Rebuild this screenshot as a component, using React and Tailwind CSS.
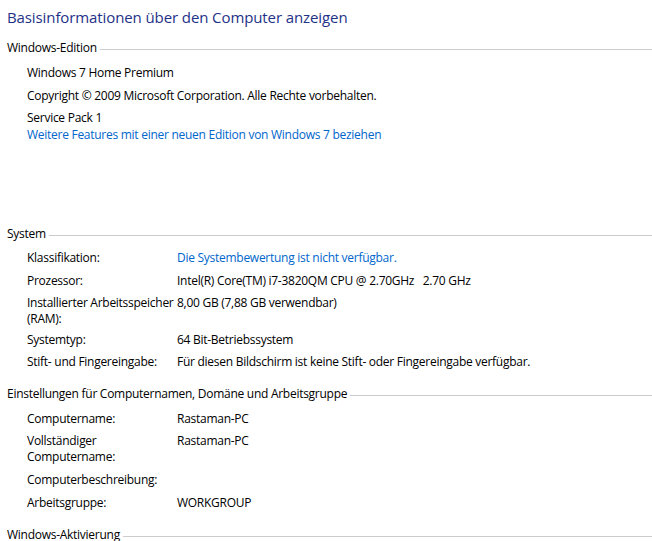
import React from "react";

function Header({ children, className = "" }) {
  return (
    <div className={"flex items-center h-4 leading-4 pl-[7px] " + className}>
      <span className="whitespace-nowrap">{children}</span>
      <div className="flex-1 h-px bg-[#cccccc] ml-[3px] mt-[2px]" />
    </div>
  );
}

function Row({ label, value, className = "", link = false }) {
  return (
    <div className={"flex pl-[27px] leading-4 " + className}>
      <div className="w-[150px] shrink-0">{label}</div>
      <div className={link ? "text-[#0066cc]" : ""}>{value}</div>
    </div>
  );
}

export default function App() {
  return (
    <div className="w-[652px] h-[541px] bg-white overflow-hidden text-black text-[12px] tracking-[-0.27px] font-['Open_Sans',sans-serif]">
      <div className="pl-[7px] mt-[5px] h-6 leading-6 text-[15px] tracking-[-0.1px] text-[#1e3287] whitespace-nowrap">
        Basisinformationen über den Computer anzeigen
      </div>

      <Header className="mt-[11px]">Windows-Edition</Header>
      <div className="pl-[27px] leading-4">
        <div className="mt-[9px]">Windows 7 Home Premium</div>
        <div className="mt-[7px]">Copyright © 2009 Microsoft Corporation. Alle Rechte vorbehalten.</div>
        <div className="mt-[6px]">Service Pack 1</div>
        <div className="mt-px text-[#0066cc]">Weitere Features mit einer neuen Edition von Windows 7 beziehen</div>
      </div>

      <Header className="mt-[83px]">System</Header>
      <Row className="mt-[8px]" label="Klassifikation:" value="Die Systembewertung ist nicht verfügbar." link />
      <Row className="mt-[7px]" label="Prozessor:" value={<span className="whitespace-pre">Intel(R) Core(TM) i7-3820QM CPU @ 2.70GHz   2.70 GHz</span>} />
      <Row
        className="mt-[6px]"
        label={
          <>
            <span className="block whitespace-nowrap">Installierter Arbeitsspeicher</span>
            <span className="block">(RAM):</span>
          </>
        }
        value="8,00 GB (7,88 GB verwendbar)"
      />
      <Row className="mt-[5px]" label="Systemtyp:" value="64 Bit-Betriebssystem" />
      <Row className="mt-[6px]" label="Stift- und Fingereingabe:" value="Für diesen Bildschirm ist keine Stift- oder Fingereingabe verfügbar." />

      <Header className="mt-[16px]">Einstellungen für Computernamen, Domäne und Arbeitsgruppe</Header>
      <Row className="mt-[9px]" label="Computername:" value="Rastaman-PC" />
      <Row
        className="mt-[6px]"
        label={
          <>
            <span className="block">Vollständiger</span>
            <span className="block">Computername:</span>
          </>
        }
        value="Rastaman-PC"
      />
      <Row className="mt-[7px]" label="Computerbeschreibung:" value="" />
      <Row className="mt-[7px]" label="Arbeitsgruppe:" value="WORKGROUP" />

      <Header className="mt-[16px]">Windows-Aktivierung</Header>
    </div>
  );
}
